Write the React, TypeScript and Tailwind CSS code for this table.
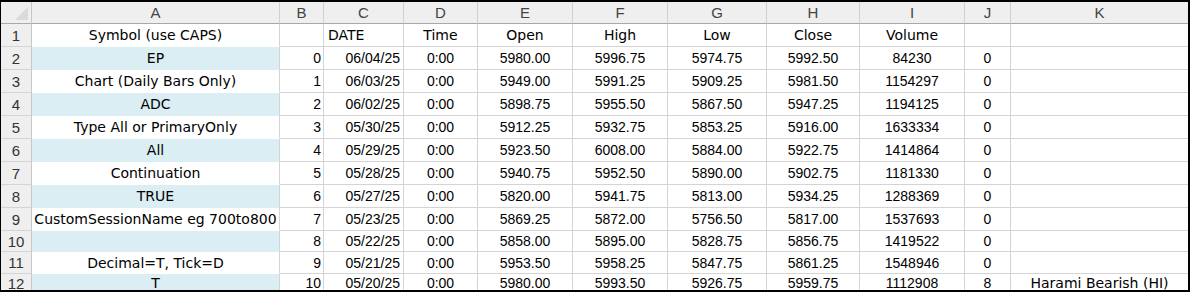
import React from "react";

const cols = ["A", "B", "C", "D", "E", "F", "G", "H", "I", "J", "K"];

type Row = string[];

const rows: Row[] = [
  ["Symbol (use CAPS)", "", "DATE", "Time", "Open", "High", "Low", "Close", "Volume", "", ""],
  ["EP", "0", "06/04/25", "0:00", "5980.00", "5996.75", "5974.75", "5992.50", "84230", "0", ""],
  ["Chart (Daily Bars Only)", "1", "06/03/25", "0:00", "5949.00", "5991.25", "5909.25", "5981.50", "1154297", "0", ""],
  ["ADC", "2", "06/02/25", "0:00", "5898.75", "5955.50", "5867.50", "5947.25", "1194125", "0", ""],
  ["Type All or PrimaryOnly", "3", "05/30/25", "0:00", "5912.25", "5932.75", "5853.25", "5916.00", "1633334", "0", ""],
  ["All", "4", "05/29/25", "0:00", "5923.50", "6008.00", "5884.00", "5922.75", "1414864", "0", ""],
  ["Continuation", "5", "05/28/25", "0:00", "5940.75", "5952.50", "5890.00", "5902.75", "1181330", "0", ""],
  ["TRUE", "6", "05/27/25", "0:00", "5820.00", "5941.75", "5813.00", "5934.25", "1288369", "0", ""],
  ["CustomSessionName eg 700to800", "7", "05/23/25", "0:00", "5869.25", "5872.00", "5756.50", "5817.00", "1537693", "0", ""],
  ["", "8", "05/22/25", "0:00", "5858.00", "5895.00", "5828.75", "5856.75", "1419522", "0", ""],
  ["Decimal=T, Tick=D", "9", "05/21/25", "0:00", "5953.50", "5958.25", "5847.75", "5861.25", "1548946", "0", ""],
  ["T", "10", "05/20/25", "0:00", "5980.00", "5993.50", "5926.75", "5959.75", "1112908", "8", "Harami Bearish (HI)"],
];

const txtFont = "font-['DejaVu_Sans',sans-serif]";
const numFont = "font-['Liberation_Sans',Arial,sans-serif]";

// numbers in Liberation Sans, words in DejaVu Sans (closest widths to the sheet font)
const isNum = (s: string) => /^[0-9.:/]+$/.test(s);

function Cell({ value, col, row }: { value: string; col: number; row: number }) {
  const blue = col === 0 && row % 2 === 0;
  let align = "justify-center";
  if (col === 1) align = "justify-end pr-[2px]";
  if (col === 2) align = row === 1 ? "justify-start pl-[4px]" : "justify-end pr-[3px]";
  const border =
    col === 0
      ? blue
        ? "border-b-[#daeef3] bg-[#daeef3]"
        : "border-b-white bg-white"
      : "border-b-[#d4d4d4] bg-white";
  return (
    <div
      className={`flex items-center overflow-hidden whitespace-nowrap border-b border-r border-r-[#d4d4d4] text-[14px] leading-none text-black ${align} ${border} ${
        isNum(value) ? numFont : txtFont
      } ${col === 10 ? "border-r-0" : ""}`}
    >
      {value}
    </div>
  );
}

export default function App() {
  return (
    <div className="h-[294px] w-[1192px] bg-white">
      <div className="h-[292px] w-[1190px] overflow-hidden border-b-2 border-l border-r-2 border-t-2 border-black">
        <div className="grid grid-cols-[31px_248px_44px_80px_74px_95px_95px_99px_93px_105px_46px_1fr] grid-rows-[22px_repeat(9,23px)_21px_22px_19px]">
          {/* corner */}
          <div className="flex items-end justify-end border-b border-r border-b-[#a8a8a8] border-r-[#c8c8c8] bg-[#efefef] pb-[3px] pr-[3px]">
            <svg width="13" height="13" viewBox="0 0 13 13">
              <polygon points="13,0 13,13 0,13" fill="#dadada" />
            </svg>
          </div>
          {cols.map((c, i) => (
            <div
              key={c}
              className={`flex items-center justify-center border-b border-b-[#a8a8a8] bg-[#efefef] font-['Liberation_Sans',Arial,sans-serif] text-[15px] leading-none text-[#444] ${
                i === 10 ? "" : "border-r border-r-[#d0d0d0]"
              }`}
            >
              {c}
            </div>
          ))}
          {rows.map((r, ri) => (
            <React.Fragment key={ri}>
              <div className="flex items-center justify-center border-b border-r border-b-[#d4d4d4] border-r-[#c8c8c8] bg-[#efefef] font-['Liberation_Sans',Arial,sans-serif] text-[15px] leading-none text-[#333]">
                {ri + 1}
              </div>
              {r.map((v, ci) => (
                <Cell key={ci} value={v} col={ci} row={ri + 1} />
              ))}
            </React.Fragment>
          ))}
        </div>
      </div>
    </div>
  );
}
